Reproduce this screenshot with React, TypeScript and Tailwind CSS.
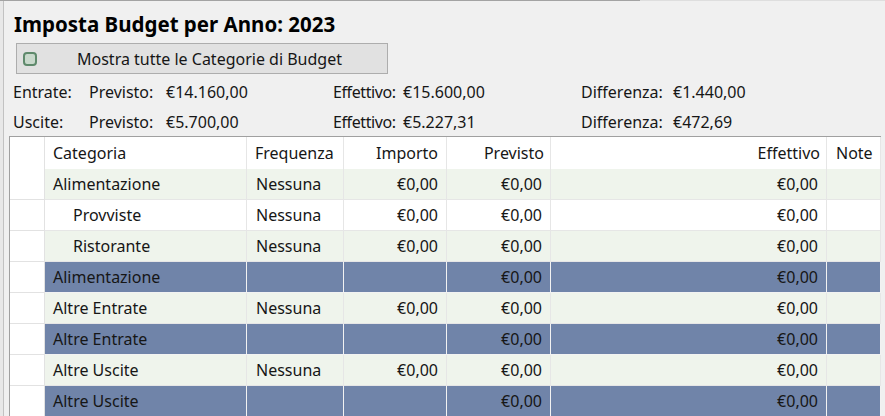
import React from 'react'

type Row = {
  name: string
  indent?: boolean
  freq?: string
  importo?: string
  previsto: string
  effettivo: string
  kind: 'green' | 'white' | 'total'
}

const rows: Row[] = [
  { name: 'Alimentazione', freq: 'Nessuna', importo: '€0,00', previsto: '€0,00', effettivo: '€0,00', kind: 'green' },
  { name: 'Provviste', indent: true, freq: 'Nessuna', importo: '€0,00', previsto: '€0,00', effettivo: '€0,00', kind: 'white' },
  { name: 'Ristorante', indent: true, freq: 'Nessuna', importo: '€0,00', previsto: '€0,00', effettivo: '€0,00', kind: 'green' },
  { name: 'Alimentazione', previsto: '€0,00', effettivo: '€0,00', kind: 'total' },
  { name: 'Altre Entrate', freq: 'Nessuna', importo: '€0,00', previsto: '€0,00', effettivo: '€0,00', kind: 'green' },
  { name: 'Altre Entrate', previsto: '€0,00', effettivo: '€0,00', kind: 'total' },
  { name: 'Altre Uscite', freq: 'Nessuna', importo: '€0,00', previsto: '€0,00', effettivo: '€0,00', kind: 'green' },
  { name: 'Altre Uscite', previsto: '€0,00', effettivo: '€0,00', kind: 'total' },
]

const cols = 'grid grid-cols-[35px_202px_97px_103px_104px_276px_54px]'

function SummaryLine({ label, previsto, effettivo, differenza }: { label: string; previsto: string; effettivo: string; differenza: string }) {
  return (
    <div className="flex items-center h-[30px] pl-[9px] whitespace-nowrap">
      <span className="w-[76px]">{label}</span>
      <span className="w-[77px]">Previsto:</span>
      <span className="w-[167px]">{previsto}</span>
      <span className="w-[70px] tracking-[-0.4px]">Effettivo:</span>
      <span className="w-[178px]">{effettivo}</span>
      <span className="w-[92px]">Differenza:</span>
      <span>{differenza}</span>
    </div>
  )
}

function TableRow({ row }: { row: Row }) {
  const bg = row.kind === 'green' ? 'bg-[#eff4ec]' : row.kind === 'total' ? 'bg-[#7084a9]' : 'bg-white'
  const line = row.kind === 'total' ? 'border-[#f2f2f2]' : 'border-[#e6e6e6]'
  const cell = `h-[31px] flex items-center border-r border-b ${line} ${bg}`
  return (
    <div className={cols}>
      <div className="h-[31px] border-r border-b border-[#e2e2e2] bg-white" />
      <div className={`${cell} ${row.indent ? 'pl-[28px]' : 'pl-[8px]'}`}>{row.name}</div>
      <div className={`${cell} pl-[9px]`}>{row.freq}</div>
      <div className={`${cell} justify-end pr-[8px]`}>{row.importo}</div>
      <div className={`${cell} justify-end pr-[8px]`}>{row.previsto}</div>
      <div className={`${cell} justify-end pr-[8px]`}>{row.effettivo}</div>
      <div className={cell} />
    </div>
  )
}

export default function App() {
  return (
    <div className="w-[885px] h-[416px] overflow-hidden bg-[#f0f0f0] flex flex-col font-['Noto_Sans',sans-serif] text-[16px] text-[#161616]">
      <div className="flex h-px shrink-0">
        <div className="w-[640px] bg-[#a3a3a3]" />
        <div className="flex-1 bg-[#dedede]" />
      </div>
      <div className="flex flex-1 min-h-0">
        <div className="w-[3px] bg-[#e8e8e8]" />
        <div className="w-px bg-[#c2c2c2]" />
        <div className="flex-1 flex flex-col min-w-0">
          <div className="h-[42px] shrink-0 flex items-center pt-[5px] pl-[10px] text-[20.5px] font-bold text-black leading-none">
            Imposta Budget per Anno: 2023
          </div>
          <button className="ml-[12px] w-[372px] h-[31px] shrink-0 border border-[#adadad] bg-[#e1e1e1] flex items-center pl-[6px] text-left">
            <span className="w-[14px] h-[14px] rounded-[4px] border-2 border-[#5f8a6c] bg-[#c9d9cc]" />
            <span className="ml-[40px]">Mostra tutte le Categorie di Budget</span>
          </button>
          <div className="mt-[3px]">
            <SummaryLine label="Entrate:" previsto="€14.160,00" effettivo="€15.600,00" differenza="€1.440,00" />
            <SummaryLine label="Uscite:" previsto="€5.700,00" effettivo="€5.227,31" differenza="€472,69" />
          </div>
          <div className="ml-[5px] mt-[-1px] w-[872px] border-l border-t border-[#a0a0a0] bg-white">
            <div className={cols}>
              <div className="h-[32px] border-r border-[#e2e2e2] bg-white" />
              <div className="h-[32px] flex items-center pl-[8px] border-r border-[#e6e6e6]">Categoria</div>
              <div className="h-[32px] flex items-center pl-[8px] border-r border-[#e6e6e6]">Frequenza</div>
              <div className="h-[32px] flex items-center justify-end pr-[8px] border-r border-[#e6e6e6]">Importo</div>
              <div className="h-[32px] flex items-center justify-end pr-[6px] border-r border-[#e6e6e6]">Previsto</div>
              <div className="h-[32px] flex items-center justify-end pr-[6px] border-r border-[#e6e6e6]">Effettivo</div>
              <div className="h-[32px] flex items-center pl-[9px] border-r border-[#e6e6e6]">Note</div>
            </div>
            {rows.map((r, i) => (
              <TableRow key={i} row={r} />
            ))}
          </div>
        </div>
      </div>
    </div>
  )
}
